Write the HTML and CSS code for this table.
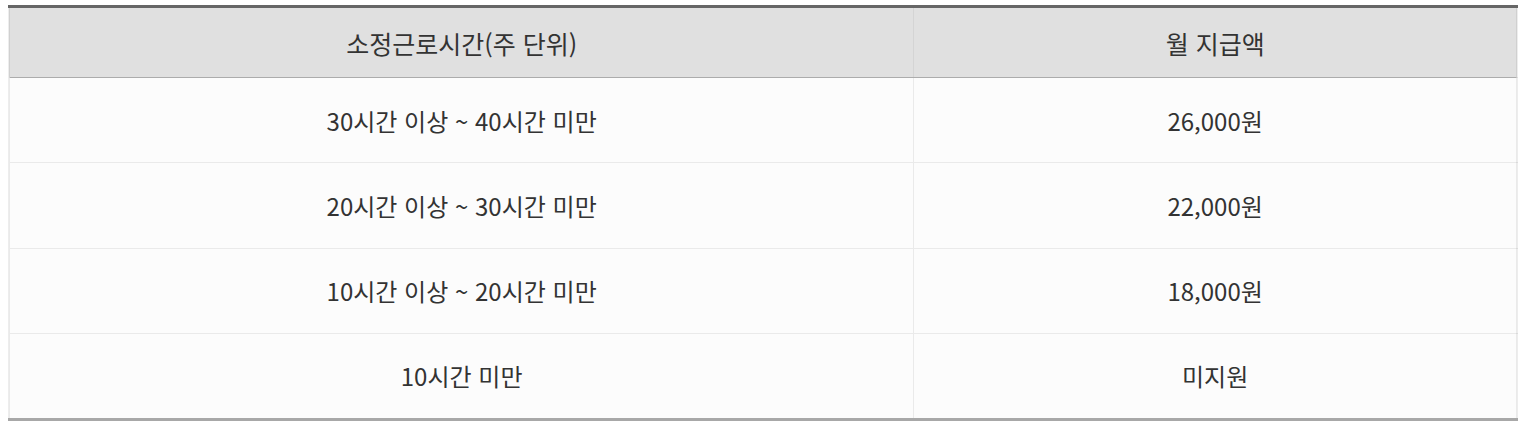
FILE: index.html
```html
<!DOCTYPE html>
<html lang="ko">
<head>
<meta charset="utf-8">
<link rel="stylesheet" href="styles.css">
</head>
<body>
<table class="pay-table">
  <colgroup>
    <col class="col-hours">
    <col class="col-pay">
  </colgroup>
  <thead>
    <tr>
      <th>소정근로시간(주 단위)</th>
      <th>월 지급액</th>
    </tr>
  </thead>
  <tbody>
    <tr><td>30시간 이상 ~ 40시간 미만</td><td>26,000원</td></tr>
    <tr><td>20시간 이상 ~ 30시간 미만</td><td>22,000원</td></tr>
    <tr><td>10시간 이상 ~ 20시간 미만</td><td>18,000원</td></tr>
    <tr><td>10시간 미만</td><td>미지원</td></tr>
  </tbody>
</table>
</body>
</html>
```

FILE: styles.css
```css
html, body {
  margin: 0;
  background: #ffffff;
}
body {
  padding: 5px 8px;
  font-family: "Noto Sans CJK KR", "Noto Sans", sans-serif;
}
.pay-table {
  width: 1510px;
  border-collapse: collapse;
  table-layout: fixed;
  border-top: 3px solid #666666;
  border-bottom: 3px solid #a8a8a8;
  border-left: 2px solid rgba(0,0,0,0.07);
  border-right: 2px solid rgba(0,0,0,0.07);
  color: #333333;
}
.col-hours { width: 60%; }
.col-pay { width: 40%; }
.pay-table th {
  background: #e0e0e0;
  height: 69px;
  padding: 0;
  font-size: 25px;
  font-weight: 400;
  text-align: center;
  border-bottom: 1px solid #acacac;
  border-left: 1px solid rgba(0,0,0,0.05);
}
.pay-table td {
  background: #fcfcfc;
  height: 84.25px;
  padding: 0;
  font-size: 24px;
  font-weight: 400;
  text-align: center;
  border-top: 1px solid rgba(0,0,0,0.07);
  border-left: 1px solid rgba(0,0,0,0.07);
}
.pay-table tbody tr:first-child td {
  border-top: none;
}
.pay-table th:first-child,
.pay-table td:first-child {
  border-left: 2px solid rgba(0,0,0,0.07);
}
```
